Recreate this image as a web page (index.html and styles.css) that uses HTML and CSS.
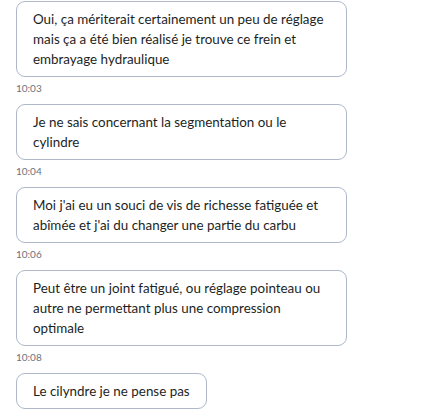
FILE: index.html
```html
<!DOCTYPE html>
<html lang="fr">
<head>
<meta charset="utf-8">
<link rel="stylesheet" href="styles.css">
</head>
<body>
<div class="chat">
  <div class="msg">
    <div class="bubble">Oui, ça mériterait certainement un peu de réglage mais ça a été bien réalisé je trouve ce frein et embrayage hydraulique</div>
    <div class="time">10:03</div>
  </div>
  <div class="msg">
    <div class="bubble">Je ne sais concernant la segmentation ou le cylindre</div>
    <div class="time">10:04</div>
  </div>
  <div class="msg">
    <div class="bubble">Moi j'ai eu un souci de vis de richesse fatiguée et abîmée et j'ai du changer une partie du carbu</div>
    <div class="time">10:06</div>
  </div>
  <div class="msg">
    <div class="bubble">Peut être un joint fatigué, ou réglage pointeau ou autre ne permettant plus une compression optimale</div>
    <div class="time">10:08</div>
  </div>
  <div class="msg">
    <div class="bubble">Le cilyndre je ne pense pas</div>
    <div class="time">10:09</div>
  </div>
</div>
</body>
</html>
```
FILE: styles.css
```css
html, body {
  margin: 0;
  padding: 0;
  background: #ffffff;
}
.chat {
  display: flex;
  flex-direction: column;
  align-items: flex-start;
  padding: 1px 16px 0 16px;
  font-family: Lato, "Noto Sans", sans-serif;
}
.msg {
  display: flex;
  flex-direction: column;
  align-items: flex-start;
  margin-bottom: 9px;
}
.bubble {
  max-width: 297px;
  padding: 7px 16px;
  border: 1px solid #aeb8c9;
  border-radius: 9px;
  font-size: 13.4px;
  line-height: 20px;
  color: #1c1f24;
}
.time {
  margin-top: 4px;
  font-size: 10px;
  line-height: 14px;
  color: #6b7280;
}
```
